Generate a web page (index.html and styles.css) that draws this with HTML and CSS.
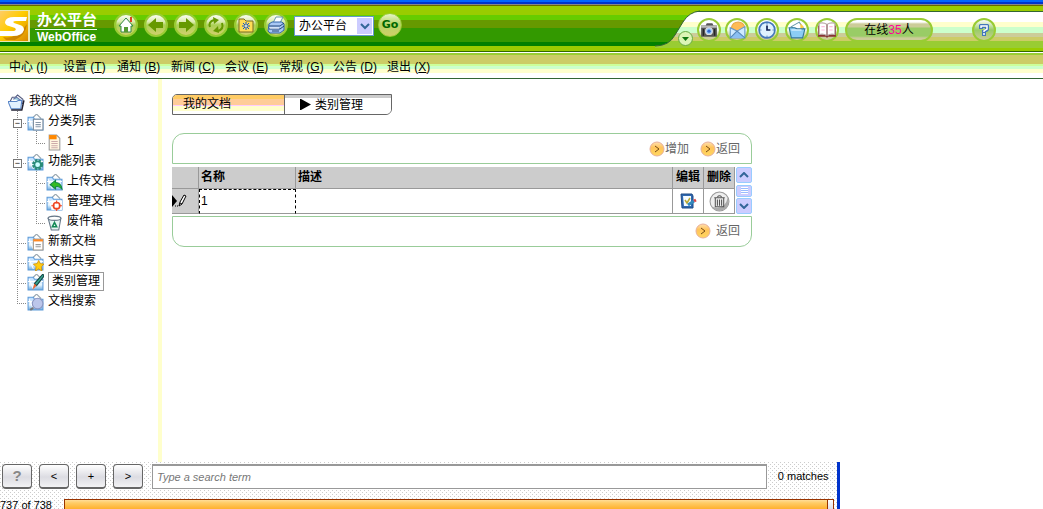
FILE: index.html
```html
<!DOCTYPE html>
<html lang="zh-CN">
<head>
<meta charset="utf-8">
<title>办公平台 WebOffice</title>
<link rel="stylesheet" href="styles.css">
</head>
<body>
<svg class="defs" aria-hidden="true">
  <defs>
    <linearGradient id="gloss" x1="0" y1="0" x2="0" y2="1"><stop offset="0" stop-color="#fff"/><stop offset=".35" stop-color="#dcebb0"/><stop offset=".5" stop-color="#aad055"/><stop offset="1" stop-color="#d5cf70"/></linearGradient>
    <linearGradient id="gold" x1="0" y1="0" x2="1" y2="1"><stop offset="0" stop-color="#fc6"/><stop offset=".45" stop-color="#ffcc00"/><stop offset="1" stop-color="#d98a00"/></linearGradient>
    <linearGradient id="page" x1="0" y1="0" x2="0" y2="1"><stop offset="0" stop-color="#b9dcff"/><stop offset=".6" stop-color="#e9f7ff"/><stop offset="1" stop-color="#6aa9e0"/></linearGradient>
    <linearGradient id="amber" x1="0" y1="0" x2="0" y2="1"><stop offset="0" stop-color="#ffe0b0"/><stop offset=".4" stop-color="#ffc45c"/><stop offset="1" stop-color="#ffd75e"/></linearGradient>
    <clipPath id="wave"><path d="M0 0H45V5Q34 6 28 16L20 29Q14 40 0 40Z"/></clipPath>
  </defs>
  <symbol id="folder" viewBox="0 0 16 16"><path d="M5 4L9 0l4 4v3H5z" fill="#fff" stroke="#9aa7b0"/><path d="M1 3h5l1 2h8v10H1z" fill="url(#page)" stroke="#5e9bd8"/><path d="M2 5l4 9M1 7h14" stroke="#fff"/></symbol>
  <symbol id="amber-go" viewBox="0 0 16 16"><circle cx="8" cy="8" r="7" fill="url(#amber)" stroke="#e8b09a"/><path d="M6 5l4 3-4 3" fill="none" stroke="#744c16"/></symbol>
  <symbol id="openfolder" viewBox="0 0 16 16"><path d="M2 7L4 3h3l2-2 5 4v4H2z" fill="#fff" stroke="#555c80"/><path d="M5 5l3-2 4 3" fill="#9fd0df" stroke="#67a"/><path d="M0 7h8l2-1h3l-1 8H3z" fill="#e2f1ff" stroke="#5a86c8"/><path d="M3 15h10l2-9" fill="none" stroke="#223" stroke-width="1.4"/></symbol>
</svg>

<header class="top">
  <div class="top-left">
    <svg class="logo" viewBox="0 0 30 32" aria-label="S"><rect x="0" y="0" width="30" height="32" fill="#e9e7b0"/><rect x="0" y="1" width="28" height="30" fill="url(#gold)"/><path d="M3 27Q16 30 27 14Q26 25 15 30H6z" fill="#b86c00" opacity=".6"/><path d="M27 7H14Q6 7 5 12Q5 15 9 16L15 18Q17 20 14 21H0V26H13Q22 26 24 20Q24 16 20 15L14 13Q12 11 16 11H26Z" fill="#fff"/></svg>
    <div class="brand"><strong>办公平台</strong><span>WebOffice</span></div>
    <nav class="tools" aria-label="工具">
      <button class="round" aria-label="主页"><svg viewBox="0 0 24 24"><circle cx="12" cy="12" r="11" fill="url(#gloss)" stroke="#9c3" stroke-width="2"/><path d="M17 4v5" stroke="#d42" stroke-width="2"/><path d="M5 13l7-8 7 8h-2v6H7v-6z" fill="#fff" stroke="#384"/><path d="M10 19v-5h4v5z" fill="#593"/></svg></button>
      <button class="round" aria-label="后退"><svg viewBox="0 0 24 24"><circle cx="12" cy="12" r="11" fill="url(#gloss)" stroke="#9c3" stroke-width="2"/><path d="M4 12l8-7v4h7v6h-7v4z" fill="#690"/></svg></button>
      <button class="round" aria-label="前进"><svg viewBox="0 0 24 24"><circle cx="12" cy="12" r="11" fill="url(#gloss)" stroke="#9c3" stroke-width="2"/><path d="M20 12l-8-7v4H5v6h7v4z" fill="#690"/></svg></button>
      <button class="round" aria-label="刷新"><svg viewBox="0 0 24 24"><circle cx="12" cy="12" r="11" fill="url(#gloss)" stroke="#9c3" stroke-width="2"/><path d="M6 14Q4 9 10 7M18 10q2 6-4 8" fill="none" stroke="#690" stroke-width="2"/><path d="M9 4l6 3-5 4zM15 20l-6-2 5-5z" fill="#690"/></svg></button>
      <button class="round" aria-label="收藏夹"><svg viewBox="0 0 24 24"><circle cx="12" cy="12" r="11" fill="url(#gloss)" stroke="#9c3" stroke-width="2"/><path d="M5 6h5l2 2h7v11H5z" fill="#fd5" stroke="#7a6a20"/><path d="M12 9v8M8 13h8M9 10l6 6M15 10l-6 6" stroke="#15c"/><circle cx="12" cy="13" r="1" fill="#fff"/></svg></button>
      <button class="round" aria-label="打印"><svg viewBox="0 0 24 24"><circle cx="12" cy="12" r="11" fill="url(#gloss)" stroke="#9c3" stroke-width="2"/><path d="M9 10l3-6h7l-3 6z" fill="#fff" stroke="#69a"/><path d="M5 11l3-2h10l2 2v6l-4 3H6l-2-2z" fill="#a8c8f4" stroke="#36a"/><path d="M5 13h11l4-3M5 16h11l4-3M8 18h7" fill="none" stroke="#247"/><path d="M6 15h9" stroke="#fff"/></svg></button>
    </nav>
    <label class="picker"><select aria-label="平台"><option>办公平台</option></select><svg viewBox="0 0 15 16" aria-hidden="true"><rect width="15" height="16" fill="#ccf"/><path d="M4 6l4 4 4-4" fill="none" stroke="#369" stroke-width="2"/></svg></label>
    <button class="round go">Go</button>
  </div>
  <svg class="curve" viewBox="0 0 45 45" aria-hidden="true">
    <g clip-path="url(#wave)"><rect width="45" height="9" fill="#9c0"/><rect y="9" width="45" height="5" fill="#6c0"/><rect y="14" width="45" height="8" fill="#690"/><rect y="22" width="45" height="14" fill="#390"/><rect y="36" width="45" height="4" fill="#008000"/></g>
    <path d="M45 5Q34 6 28 16L20 29Q14 40 0 40" fill="none" stroke="#363"/>
  </svg>
  <div class="top-right">
    <button class="drop" aria-label="展开"><svg viewBox="0 0 15 15"><circle cx="7.500" cy="7.500" r="7" fill="#dbf5b5" stroke="#6a4"/><path d="M4 6h7l-3.500 4z" fill="#171"/></svg></button>
    <button class="ring first" aria-label="相机"><svg viewBox="0 0 16 16"><path d="M1 4h4l1-2h5l1 2h3v10H1z" fill="#555"/><path d="M1 4h14v2H1z" fill="#bbb"/><path d="M3 7v6M13 7v6" stroke="#222"/><circle cx="8" cy="9" r="3" fill="#9cf" stroke="#ddd"/><circle cx="8" cy="9" r="1.500" fill="#36c"/></svg></button>
    <button class="ring" aria-label="邮件"><svg viewBox="0 0 16 16"><path d="M3 6Q4 1 9 1t6 5l-6 4z" fill="#fb5" stroke="#e9a94a"/><path d="M2 6l6 3 7-4v10H2z" fill="#cfeaff" stroke="#69c"/><path d="M2 15l6-6 7 6" fill="#8bbff2" stroke="#58b"/></svg></button>
    <button class="ring" aria-label="时间"><svg viewBox="0 0 16 16"><circle cx="8" cy="8" r="7" fill="#dff2ff" stroke="#47b" stroke-width="1.500"/><path d="M8 4v4h3" fill="none" stroke="#125" stroke-width="1.500"/><path d="M8 2v1M8 13v1M2 8h1M13 8h1" stroke="#36a"/></svg></button>
    <button class="ring" aria-label="文件夹"><svg viewBox="0 0 16 16"><path d="M3 5l7-4 4 6-2 5z" fill="#fff" stroke="#69a"/><path d="M11 2l3 3-3 4z" fill="#fc4"/><path d="M1 6h5l2 1h7l-2 8H3z" fill="#8ccdf5" stroke="#379"/><path d="M3 8h9" stroke="#e8f8ff"/></svg></button>
    <button class="ring" aria-label="书"><svg viewBox="0 0 16 16"><path d="M0 4h16v10H9l-1 1-1-1H0z" fill="#833"/><path d="M1 2q4-1 7 1 3-2 7-1v10q-4-1-7 1-3-2-7-1z" fill="#fff" stroke="#b9a8a8"/><path d="M8 3v10" stroke="#744"/><path d="M3 5h3M3 8h3M10 5h3M10 8h3" stroke="#fbd"/></svg></button>
    <a class="online" href="#">在线<em>35</em>人</a>
    <button class="ring help" aria-label="帮助"><svg viewBox="0 0 10 12"><path d="M1 0h8l1 1v5L8 8H7v4H3V6h3V4H4v1H0V1z" fill="#47b"/><path d="M2 4V2h6v3L5 7v1M5 9v2" fill="none" stroke="#fff" stroke-width="1.500"/></svg></button>
  </div>
</header>

<nav class="menu" aria-label="主菜单">
  <a href="#">中心 (<u>I</u>)</a><a href="#">设置 (<u>T</u>)</a><a href="#">通知 (<u>B</u>)</a><a href="#">新闻 (<u>C</u>)</a><a href="#">会议 (<u>E</u>)</a><a href="#">常规 (<u>G</u>)</a><a href="#">公告 (<u>D</u>)</a><a href="#">退出 (<u>X</u>)</a>
</nav>

<div class="body">
  <nav class="tree" aria-label="文档">
    <a class="node root" href="#"><svg><use href="#openfolder"/></svg><span>我的文档</span></a>
    <div class="node"><span class="guide v h"><button class="toggle" aria-label="折叠">−</button></span><a href="#"><svg viewBox="0 0 16 16"><use href="#folder"/><path d="M6 5h9v10H6z" fill="#fff" stroke="#789"/><path d="M8 8h5M8 10h5M8 12h5" stroke="#89a"/></svg><span>分类列表</span></a></div>
    <div class="node"><span class="guide v"></span><span class="guide h last"></span><a href="#"><svg viewBox="0 0 16 16"><path d="M3 1h7l3 3v11H3z" fill="#fff5df" stroke="#999"/><path d="M3 1h7v4H3z" fill="#f80"/><path d="M5 7h6M5 9h6M5 11h6M5 13h6" stroke="#caa"/></svg><span>1</span></a></div>
    <div class="node"><span class="guide v h"><button class="toggle" aria-label="折叠">−</button></span><a href="#"><svg viewBox="0 0 16 16"><use href="#folder"/><circle cx="10" cy="10" r="4" fill="#dff" stroke="#298b78" stroke-width="2.500" stroke-dasharray="2.200 1"/><circle cx="10" cy="10" r="3" fill="#cff" stroke="#298b78" stroke-width="1.500"/></svg><span>功能列表</span></a></div>
    <div class="node"><span class="guide v"></span><span class="guide v h"></span><a href="#"><svg viewBox="0 0 16 16"><use href="#folder"/><path d="M4 10l5-4v2q5 0 6 6-3-3-6-2v2z" fill="#3b2" stroke="#184"/></svg><span>上传文档</span></a></div>
    <div class="node"><span class="guide v"></span><span class="guide v h"></span><a href="#"><svg viewBox="0 0 16 16"><use href="#folder"/><rect x="5" y="6" width="10" height="9" fill="#fff"/><circle cx="10" cy="11" r="3" fill="none" stroke="#e42" stroke-width="1.500"/><path d="M10 6v3M10 13v3M5 11h3M12 11h3" stroke="#e42"/></svg><span>管理文档</span></a></div>
    <div class="node"><span class="guide v"></span><span class="guide h last"></span><a href="#"><svg viewBox="0 0 16 16"><path d="M2 4h12l-2 11H5z" fill="#e6f5f3" stroke="#678"/><ellipse cx="8" cy="4" rx="6" ry="2" fill="#fff" stroke="#678"/><path d="M8 8l2 4H6z" fill="none" stroke="#185" stroke-width="1.500"/></svg><span>废件箱</span></a></div>
    <div class="node"><span class="guide v h"></span><a href="#"><svg viewBox="0 0 16 16"><use href="#folder"/><path d="M6 5h9v10H6z" fill="#fff" stroke="#a98"/><path d="M6 5h9v2H6z" fill="#f82"/><path d="M8 10h5M8 12h5" stroke="#999"/></svg><span>新新文档</span></a></div>
    <div class="node"><span class="guide v h"></span><a href="#"><svg viewBox="0 0 16 16"><use href="#folder"/><path d="M11 6l1.500 3 3.500.5-2.500 2.500.5 4-3-2-3 2 .5-4L6 9.500 9.500 9z" fill="#fc1" stroke="#c80" stroke-width=".7"/></svg><span>文档共享</span></a></div>
    <div class="node"><span class="guide v h"></span><a href="#" aria-current="page"><svg viewBox="0 0 16 16"><use href="#folder"/><path d="M15 0l1 2-7 9-2-2z" fill="#3aa892" stroke="#144"/><path d="M7 9l2 2-4 4z" fill="#e63"/></svg><span class="current">类别管理</span></a></div>
    <div class="node"><span class="guide h last"></span><a href="#"><svg viewBox="0 0 16 16"><use href="#folder"/><circle cx="10" cy="9" r="5" fill="#bcc6ea" stroke="#8b95c0"/><path d="M6 13l-3 2" stroke="#777" stroke-width="2"/></svg><span>文档搜索</span></a></div>
  </nav>

  <main class="main">
    <div class="tabs">
      <a class="tab active" href="#">我的文档</a>
      <a class="tab" href="#"><svg viewBox="0 0 11 11" aria-hidden="true"><path d="M0 0h1l10 5.500L1 11H0z"/></svg>类别管理</a>
    </div>
    <section class="bar head">
      <a href="#"><svg><use href="#amber-go"/></svg>增加</a>
      <a href="#"><svg><use href="#amber-go"/></svg>返回</a>
    </section>
    <div class="grid">
      <table>
        <colgroup><col class="c-mark"><col class="c-name"><col><col class="c-act"><col class="c-act"></colgroup>
        <thead><tr><th></th><th>名称</th><th>描述</th><th class="act">编辑</th><th class="act">删除</th></tr></thead>
        <tbody><tr>
          <td class="mark"><svg viewBox="0 0 16 14" aria-label="编辑中"><path d="M0 1l5 6-5 6z"/><path d="M7 12l1-4 4-7 2 1-4 8zM8 9l2 1" fill="#fff" stroke="#000"/><path d="M3 12h3" stroke="#000" stroke-dasharray="1 1"/></svg></td>
          <td class="sel">1</td><td></td>
          <td class="act"><button aria-label="编辑"><svg viewBox="0 0 18 18"><path d="M2 2h11l1 2v12H3z" fill="#2e68b0" stroke="#1f4a85"/><path d="M4 4h8v10H5z" fill="#f4fbff"/><path d="M6 8l2 3 3-5" fill="none" stroke="#ba3" stroke-width="1.500"/><path d="M9 13l6-4" stroke="#38b" stroke-width="3"/><path d="M15 9l2-1" stroke="#d44" stroke-width="3"/></svg></button></td>
          <td class="act"><button aria-label="删除"><svg class="trash" viewBox="0 0 20 20"><circle cx="10" cy="10" r="9" fill="#eee" stroke="#999"/><path d="M3 15Q15 19 18 6Q21 17 10 19Q6 19 3 15z" fill="#aaa"/><path d="M5 6.500h10M8 5.500q2-2 4 0M6 7v8h8V7M8 8v6M10 8v6M12 8v6" fill="none" stroke="#555"/></svg></button></td>
        </tr></tbody>
      </table>
      <div class="scroll">
        <button aria-label="向上"><svg viewBox="0 0 10 6"><path d="M1 5l4-4 4 4" fill="none" stroke="#369" stroke-width="2"/></svg></button>
        <span class="thumb"></span>
        <button aria-label="向下"><svg viewBox="0 0 10 6"><path d="M1 1l4 4 4-4" fill="none" stroke="#369" stroke-width="2"/></svg></button>
      </div>
    </div>
    <section class="bar foot"><a class="wide" href="#"><svg><use href="#amber-go"/></svg>返回</a></section>
  </main>
</div>

<footer class="finder">
  <div class="find-row">
    <button class="key mute">?</button><button class="key">&lt;</button><button class="key">+</button><button class="key">&gt;</button>
    <input type="text" placeholder="Type a search term" aria-label="Type a search term">
    <output>0 matches</output>
  </div>
  <div class="count-row"><span>737 of 738</span><div class="progress"><i></i></div></div>
</footer>
</body>
</html>
```
FILE: styles.css
```css
* { box-sizing: border-box; }
body {
  margin: 0;
  height: 100vh;
  overflow: hidden;
  display: flex;
  flex-direction: column;
  background: #fff;
  color: #000;
  font: 12px/20px "Liberation Sans", "Noto Sans CJK SC", sans-serif;
}
a { color: inherit; text-decoration: none; }
button { font: inherit; padding: 0; border: 0; background: none; color: inherit; }
svg { display: block; flex: none; }
.defs { position: absolute; width: 0; height: 0; }

.top {
  flex: none;
  display: flex;
  height: 53px;
  padding-top: 6px;
  border-bottom: 1px solid #fff;
  background: linear-gradient(#06f 0 2px, #03c 2px 4px, #878787 4px 5px, #666600 5px 6px, #9c0 6px 11px, #363 11px 12px, #fff 12px 22px, #ffffcc 22px 27px, #ccffcc 27px 33px, #cccc99 33px 37px, #cccc66 37px 41px, #99cc33 41px 48px, #9c0 48px 51px, #360 51px);
}
.top-left {
  display: flex;
  align-items: flex-start;
  width: 655px;
  flex: none;
  height: 45px;
  background: linear-gradient(#9c0 0 9px, #6c0 9px 14px, #690 14px 22px, #390 22px 36px, #008000 36px 40px, #9c0 40px);
}
.curve { width: 45px; height: 45px; margin-right: -22px; }
.logo { width: 30px; height: 32px; margin-top: 4px; }
.brand { display: flex; flex-direction: column; margin: 4px 0 0 5px; width: 62px; color: #fff; }
.brand strong { font-size: 15px; line-height: 19px; padding-left: 2px; border-bottom: 1px solid #efe; }
.brand span { font-size: 12px; line-height: 15px; font-weight: bold; padding-left: 2px; }
.tools { display: flex; gap: 6px; margin: 7px 0 0 17px; }
.round, .round svg { width: 24px; height: 24px; }
.go {
  margin: 7px 0 0 4px;
  border: 1px solid #9c3;
  border-radius: 50%;
  background: linear-gradient(#e8f4c8, #b5d566 45%, #d0cf68);
  color: #060;
  font: bold 11px/22px "DejaVu Sans", sans-serif;
}
.picker { display: grid; width: 80px; height: 20px; margin: 10px 0 0 6px; }
.picker > * { grid-area: 1 / 1; }
.picker select {
  appearance: none;
  width: 100%;
  border: 1px solid #69c;
  border-radius: 0;
  background: #fff;
  color: #000;
  padding: 0 16px 0 4px;
  font: inherit;
  line-height: 16px;
}
.picker svg { justify-self: end; width: 15px; height: 16px; margin: 2px; pointer-events: none; }

.top-right { display: flex; align-items: flex-start; gap: 6px; padding-top: 12px; }
.drop { margin: 13px -2px 0 0; }
.drop svg { width: 15px; height: 15px; }
.ring {
  display: grid;
  place-items: center;
  width: 24px;
  height: 24px;
  border: 2px solid #99cc33;
  border-radius: 50%;
  background: linear-gradient(#fff 30%, #efe 50%, #cccc99 80%);
}
.first { margin-right: -2px; }
.ring svg { width: 18px; height: 18px; }
.online {
  width: 88px;
  height: 24px;
  border: 2px solid #99cc33;
  border-radius: 12px;
  background: linear-gradient(#fff 2px, #cccc99 4px 7px, #99cc66 8px 16px, #cccc99 18px);
  text-align: center;
}
.online em { color: #f09; font-style: normal; }
.help { margin-left: 33px; background: linear-gradient(#fff, #99cc66 50%, #cccc99); }
.ring.help svg { width: 10px; height: 12px; }

.menu {
  flex: none;
  display: flex;
  height: 26px;
  padding: 5px 9px 0;
  border-bottom: 1px solid #363;
  background: linear-gradient(#9c3 0 2px, #cccc66 2px 11px, #ccff99 11px 13px, #ccffcc 13px 16px, #ffffcc 16px 20px, #fff 20px);
}
.menu a { width: 54px; line-height: 18px; white-space: nowrap; }

.body { flex: 1; display: flex; min-height: 0; }
.tree { flex: none; width: 162px; border-right: 4px solid #ffffcc; padding: 12px 0 0 8px; }
.node { display: flex; height: 20px; align-items: center; }
.node a { display: flex; align-items: center; gap: 4px; }
.node svg { width: 17px; height: 17px; margin-top: 2px; }
.root { gap: 4px; }
.guide {
  --v: repeating-linear-gradient(#888 0 1px, #fff 1px 2px);
  --h: repeating-linear-gradient(90deg, #888 0 1px, #fff 1px 2px);
  display: flex;
  align-items: center;
  justify-content: center;
  width: 19px;
  height: 20px;
  background-repeat: no-repeat;
}
.v { background-image: var(--v); background-position: 9px 0; background-size: 1px 20px; }
.h { background-image: var(--v), var(--h); background-position: 9px 0, 9px 12px; background-size: 1px 20px, 10px 1px; }
.last { background-size: 1px 12px, 10px 1px; }
.toggle { width: 9px; height: 9px; margin-top: 4px; border: 1px solid #777; background: #fff; line-height: 7px; font-size: 9px; }
.current { border: 1px solid #999; padding: 0 3px; line-height: 17px; }

.main { flex: 1; max-width: 600px; padding: 15px 10px 0; }
.tabs { display: flex; width: 220px; height: 21px; border: 1px solid #666; border-radius: 5px 0 6px 0; overflow: hidden; }
.tab {
  flex: 1;
  display: flex;
  align-items: center;
  gap: 4px;
  padding-left: 15px;
  background: linear-gradient(#ccc 3px, #fff 3px);
}
.tab.active {
  flex: 0 0 112px;
  padding: 0 0 2px 10px;
  border-right: 1px solid #666;
  background: linear-gradient(#fc6 4px, #fc9 4px 10px, #fcf 10px 11px, #ffc 11px 16px, #fff 16px);
}
.tab svg { width: 11px; height: 11px; }
.bar {
  display: flex;
  justify-content: flex-end;
  align-items: center;
  gap: 11px;
  height: 31px;
  padding-right: 11px;
  border: 1px solid #99cc99;
  color: #666;
}
.bar a { display: flex; align-items: center; }
.bar svg { width: 16px; height: 16px; }
.bar .wide { gap: 5px; }
.head { margin-top: 18px; border-radius: 12px 12px 0 0; }
.foot { margin-top: 2px; border-radius: 0 0 12px 12px; padding-bottom: 2px; }
.grid { display: flex; gap: 1px; margin-top: 3px; }
table { flex: 1; border-collapse: separate; border-spacing: 0; table-layout: fixed; width: 100%; }
.c-mark { width: 27px; }
.c-name { width: 97px; }
.c-act { width: 31px; }
th, td { padding: 0 1px 2px 2px; border: solid #999; border-width: 0 1px 1px 0; text-align: left; }
th { height: 22px; background: #ccc; line-height: 18px; }
td { height: 25px; }
th.act, td.act { padding: 0; text-align: center; }
th.act { padding-bottom: 2px; }
.mark { background: #ccc; padding: 0; }
.mark svg { width: 16px; height: 14px; }
.sel { border: 1px dashed #000; border-bottom: 1px solid #999; padding-left: 1px; }
.act button { display: grid; place-items: center; width: 100%; }
.act svg { width: 18px; height: 18px; }
.act .trash { width: 21px; height: 21px; }
.scroll { display: flex; flex-direction: column; justify-content: space-between; width: 16px; }
.scroll button, .thumb { display: grid; place-items: center; height: 16px; background: #ccf; border: 1px solid #9cf; border-radius: 2px; }
.scroll svg { width: 10px; height: 6px; }
.scroll .thumb { height: 12px; background: repeating-linear-gradient(#fff 0 1px, #9bf 1px 2px) center / 7px 7px no-repeat #ccf; }

.finder {
  --dot: conic-gradient(from 270deg at 1px 1px, #ccc 90deg, transparent 0);
  flex: none;
  width: 80.5%;
  height: 47px;
  overflow: hidden;
  border-right: 3px solid #03c;
  background: var(--dot) 0 0 / 4px 4px, var(--dot) 2px 2px / 4px 4px, #fff;
  font: 11px/16px "Liberation Sans", sans-serif;
}
.find-row { display: flex; gap: 7px; padding: 2px 8px 0 2px; }
.key {
  width: 30px;
  height: 25px;
  border: 1px solid #666;
  border-bottom-width: 2px;
  border-radius: 4px;
  background: linear-gradient(#fff, #dcdce2 55%, #f2f2f4);
}
.mute { color: #888; font-size: 15px; font-weight: bold; }
.finder input {
  flex: 1;
  min-width: 0;
  height: 25px;
  margin-left: 2px;
  padding: 0 4px;
  border: 1px solid #999;
  border-top-width: 2px;
  background: #fff;
  font: italic 11px "Liberation Sans", sans-serif;
}
.finder input::placeholder { color: #777; opacity: 1; }
.finder output { margin-left: 4px; line-height: 25px; }
.count-row { display: flex; gap: 12px; margin-top: 8px; }
.progress {
  flex: 1;
  display: flex;
  justify-content: flex-end;
  height: 16px;
  margin: 2px 3px 0 0;
  border: 1px solid #930;
  background: linear-gradient(#fd9, #fc6 3px, #f90);
}
.progress i { width: 6px; border-left: 1px solid #930; background: linear-gradient(#fff, #ccd); }
```
